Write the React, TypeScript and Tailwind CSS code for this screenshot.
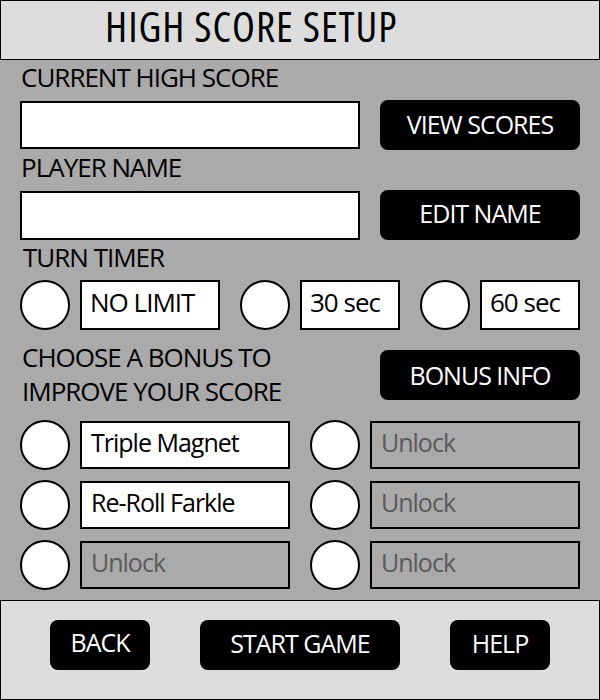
function Circle() {
  return <div className="h-[50px] w-[50px] shrink-0 rounded-full border-2 border-black bg-white" />;
}

function BlackButton({ label, w, extra = '' }: { label: string; w: string; extra?: string }) {
  return (
    <button
      type="button"
      className={`${w} ${extra} flex h-[50px] items-center justify-center rounded-[8px] bg-black text-[25px] tracking-[-1px] text-white`}>
      {label}
    </button>
  );
}

function BonusSlot({ label, locked }: { label: string; locked?: boolean }) {
  return (
    <div className="flex items-center gap-[10px]">
      <Circle />
      <div
        className={`flex h-[48px] flex-1 items-center border-2 border-black pb-[5px] pl-[9px] text-[25px] ${
          locked ? 'bg-[#aaaaaa] text-[#5a5a5a]' : 'bg-white text-black'
        }`}>
        {label}
      </div>
    </div>
  );
}

export default function App() {
  const timers = [
    { label: 'NO LIMIT', w: 'w-[140px]' },
    { label: '30 sec', w: 'w-[100px]' },
    { label: '60 sec', w: 'w-[100px]' },
  ];

  return (
    <div className="flex h-[700px] w-[600px] flex-col font-['Open_Sans',sans-serif] tracking-[-1px] text-black">
      {/* header */}
      <div className="h-[60px] border border-black bg-[#dddddd] pl-[104px] text-[42px] leading-[49px] font-stretch-condensed tracking-[1px]">
        HIGH SCORE SETUP
      </div>

      {/* main */}
      <div className="flex h-[540px] flex-col bg-[#aaaaaa] px-5">
        <div className="h-[40px] pl-[1px] text-[26px] leading-[34px]">CURRENT HIGH SCORE</div>
        <div className="flex h-[50px] items-center justify-between">
          <div className="h-[48px] w-[340px] border-2 border-black bg-white" />
          <BlackButton label="VIEW SCORES" w="w-[200px]" />
        </div>
        <div className="h-[40px] pl-[1px] text-[26px] leading-[34px]">PLAYER NAME</div>
        <div className="flex h-[50px] items-center justify-between">
          <div className="h-[49px] w-[340px] border-2 border-black bg-white" />
          <BlackButton label="EDIT NAME" w="w-[200px]" extra="pb-[3px]" />
        </div>
        <div className="h-[40px] pl-[3px] text-[26px] leading-[34px]">TURN TIMER</div>
        <div className="flex h-[50px] items-center gap-5">
          {timers.map(t => (
            <div key={t.label} className="flex items-center gap-[10px]">
              <Circle />
              <div className={`${t.w} flex h-[50px] items-center border-2 border-black bg-white pb-[5px] pl-[8px] text-[26px]`}>
                {t.label}
              </div>
            </div>
          ))}
        </div>

        <div className="mt-[10px] flex h-[68px] items-start justify-between">
          <div className="pl-[2px] text-[26px] leading-[34px]">
            CHOOSE A BONUS TO
            <br />
            IMPROVE YOUR SCORE
          </div>
          <div className="mt-[10px]">
            <BlackButton label="BONUS INFO" w="w-[200px]" extra="pt-[2px]" />
          </div>
        </div>

        <div className="mt-[12px] grid grid-cols-2 gap-x-5 gap-y-[10px]">
          <BonusSlot label="Triple Magnet" />
          <BonusSlot label="Unlock" locked />
          <BonusSlot label="Re-Roll Farkle" />
          <BonusSlot label="Unlock" locked />
          <BonusSlot label="Unlock" locked />
          <BonusSlot label="Unlock" locked />
        </div>
      </div>

      {/* footer */}
      <div className="flex h-[100px] items-start gap-[50px] border border-black bg-[#dddddd] pl-[49px] pt-[19px]">
        <BlackButton label="BACK" w="w-[100px]" extra="pb-[5px]" />
        <BlackButton label="START GAME" w="w-[200px]" extra="pb-[3px]" />
        <BlackButton label="HELP" w="w-[100px]" extra="pb-[3px]" />
      </div>
    </div>
  );
}
